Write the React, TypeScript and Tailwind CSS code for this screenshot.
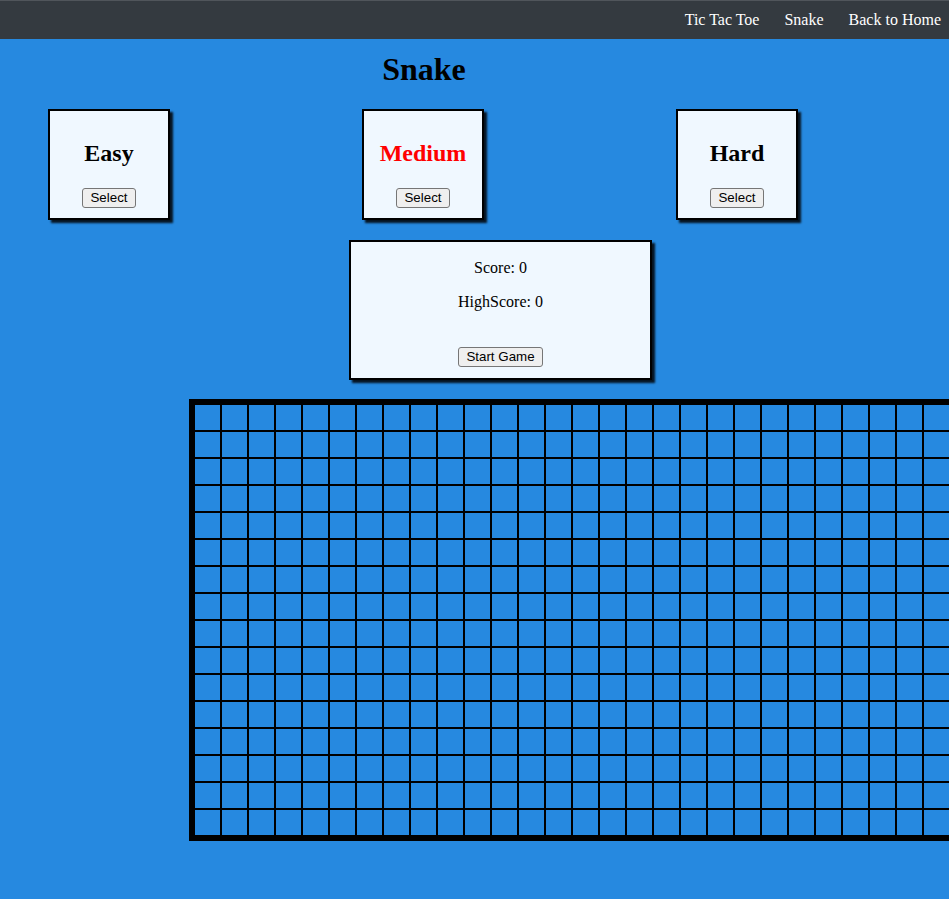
import React from "react";

const ROWS = 16;
const COLS = 30;

const levels = [
  { name: "Easy", active: false },
  { name: "Medium", active: true },
  { name: "Hard", active: false },
];

const serif = "font-['Liberation_Serif','Times_New_Roman',serif]";
const btn =
  "h-[20px] px-[7px] bg-[#efefef] border border-[#767676] rounded-[3px] text-[13.33px] leading-none text-black font-['Liberation_Sans',Arial,sans-serif]";

const App = () => {
  const cells = Array.from({ length: ROWS * COLS });

  return (
    <div className={`w-full h-[899px] overflow-hidden bg-[#2689e0] ${serif}`}>
      <nav className="h-[39px] bg-[#343a40] border-t border-[#50555b] flex items-center justify-end gap-[25px] pr-[8px] text-white text-[16px]">
        <a>Tic Tac Toe</a>
        <a>Snake</a>
        <a>Back to Home</a>
      </nav>

      <h1 className="w-[848px] mt-[12px] text-center text-[32px] leading-[37px] font-bold text-black">
        Snake
      </h1>

      <div className="flex gap-[192px] pl-[48px] mt-[21px]">
        {levels.map((level) => (
          <div
            key={level.name}
            className="w-[122px] h-[111px] bg-[#f0f8ff] border-2 border-black shadow-[3px_3px_2px_rgba(0,0,0,0.85)] flex flex-col items-center pt-[28px]"
          >
            <h2
              className={`text-[24px] leading-[28px] font-bold ${
                level.active ? "text-[#ff0000]" : "text-black"
              }`}
            >
              {level.name}
            </h2>
            <button className={`${btn} mt-[21px]`}>Select</button>
          </div>
        ))}
      </div>

      <div className="ml-[349px] mt-[20px] w-[303px] h-[140px] bg-[#f0f8ff] border-2 border-black shadow-[3px_3px_2px_rgba(0,0,0,0.85)] flex flex-col items-center pt-[17px] text-[16px] leading-[18px] text-black">
        <p>Score: 0</p>
        <p className="mt-[16px]">HighScore: 0</p>
        <button className={`${btn} mt-[36px]`}>Start Game</button>
      </div>

      <div className="ml-[189px] mt-[19px] w-max border-[5px] border-black grid grid-cols-[repeat(30,27px)]">
        {cells.map((_, i) => (
          <div key={i} className="w-[27px] h-[27px] border border-black" />
        ))}
      </div>
    </div>
  );
};

export default App;
